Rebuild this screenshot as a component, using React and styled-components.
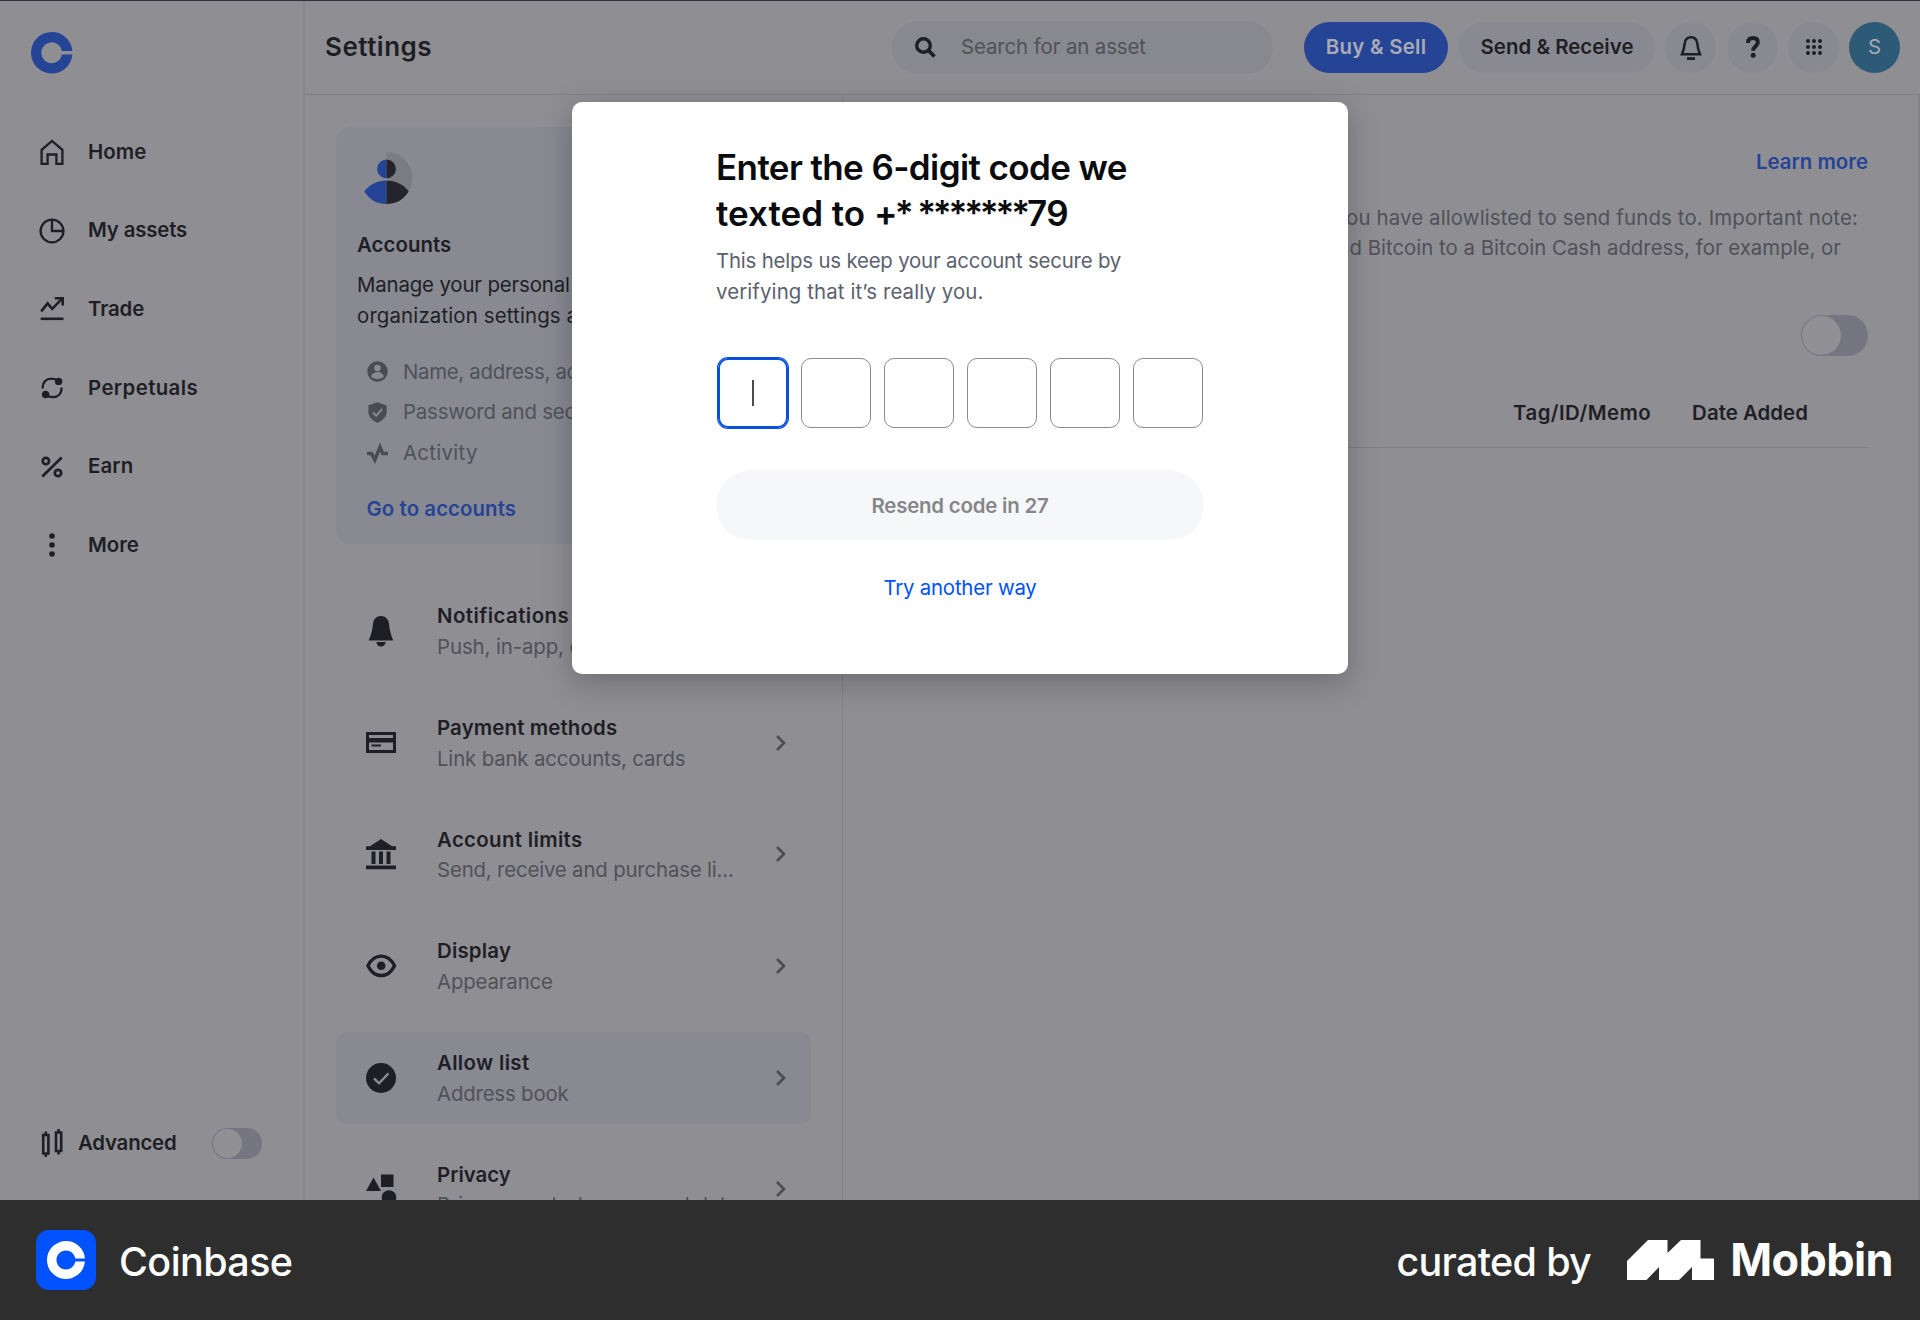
import React from "react";
import styled, { createGlobalStyle, css } from "styled-components";

const c = {
  bg: "#8f8e93",
  panel: "#888991",
  pill: "#88898f",
  line: "#7f8086",
  ink: "#1e1f25",
  muted: "#505159",
  blue: "#254496",
  track: "#757681",
};

const Global = createGlobalStyle`
  * { box-sizing: border-box; }
  body { margin: 0; background: #2e2e2e; font-family: Inter, "Liberation Sans", sans-serif; }
  svg { display: block; flex: none; overflow: visible; }
`;

const Page = styled.div`
  width: 1920px;
  height: 1320px;
  display: flex;
  flex-direction: column;
  overflow: hidden;
`;

const Screen = styled.div`
  position: relative;
  height: 1200px;
  flex: none;
  display: grid;
  grid-template-columns: 305px 1fr;
  overflow: hidden;
  background: ${c.bg};
  border-top: 1px solid #35313c;
  color: ${c.ink};
`;

const Text = styled.span`
  display: block;
  width: max-content;
  white-space: nowrap;
  font-size: ${(p) => p.$size || 20.4}px;
  line-height: ${(p) => p.$lh || 30.6}px;
  font-weight: ${(p) => p.$weight || 400};
  letter-spacing: ${(p) => p.$ls || 0}px;
  color: ${(p) => p.$color || c.ink};
`;

const Track = styled.span`
  letter-spacing: ${(p) => p.$ls}px;
`;

const Sidebar = styled.aside`
  display: flex;
  flex-direction: column;
  border-right: 2px solid #85868c;
  padding: 30.5px 40px 0 31px;
`;

const Nav = styled.nav`
  display: flex;
  flex-direction: column;
  margin-top: 39.5px;
`;

const NavItem = styled.a`
  display: flex;
  align-items: center;
  height: 78.7px;
  gap: 20px;
  padding-left: 5px;
`;

const IconBox = styled.span`
  width: 32px;
  height: 32px;
  display: flex;
  align-items: center;
  justify-content: center;
  flex: none;
`;

const Advanced = styled.div`
  display: flex;
  align-items: center;
  margin-top: 538.5px;
  height: 40px;
  padding-left: 10px;
`;

const AdvancedLabel = styled(Text)`
  margin: 0 36px 0 15px;
`;

const Toggle = styled.span`
  width: ${(p) => p.$w}px;
  height: ${(p) => p.$h}px;
  flex: none;
  border-radius: ${(p) => p.$h / 2}px;
  background: ${c.track};
  padding: 1px;
  display: flex;
  &::before {
    content: "";
    height: 100%;
    aspect-ratio: 1;
    border-radius: 50%;
    background: #919095;
  }
`;

const Main = styled.main`
  display: flex;
  flex-direction: column;
  min-width: 0;
`;

const Header = styled.header`
  height: 94px;
  flex: none;
  border-bottom: 1px solid ${c.line};
  display: flex;
  align-items: center;
  padding: 0 20px 1px 20px;
`;

const PageTitle = styled.h1`
  margin: 0;
  flex: 1;
`;

const Search = styled.div`
  width: 381px;
  height: 53px;
  border-radius: 27px;
  background: ${c.pill};
  display: flex;
  align-items: center;
  gap: 25px;
  padding-left: 23px;
  margin-right: 31px;
`;

const Pill = styled.button`
  border: 0;
  margin: 0 ${(p) => p.$gap}px 0 0;
  padding: 0;
  width: ${(p) => p.$w}px;
  height: 51px;
  border-radius: 26px;
  background: ${(p) => p.$bg || "#898a91"};
  display: flex;
  align-items: center;
  justify-content: center;
  font-family: inherit;
`;

const Columns = styled.div`
  flex: 1;
  display: grid;
  grid-template-columns: 538px 1fr;
  min-height: 0;
`;

const Settings = styled.section`
  border-right: 1px solid ${c.line};
  padding: 32px 31px 0 31px;
  overflow: hidden;
`;

const Card = styled.div`
  height: 417px;
  border-radius: 15px;
  background: ${c.panel};
  padding: 24px 21px 0;
  display: flex;
  flex-direction: column;
  overflow: hidden;
`;

const CardTitle = styled(Text)`
  margin: 24.5px 0 10.2px;
`;

const CardList = styled.div`
  display: flex;
  flex-direction: column;
  margin: 20px 0 20px 10px;
`;

const CardItem = styled.div`
  height: 40.8px;
  display: flex;
  align-items: center;
  gap: 15px;
`;

const CardLink = styled(Text)`
  margin-left: 9.5px;
`;

const Menu = styled.div`
  display: flex;
  flex-direction: column;
  gap: 19.9px;
  margin-top: 41px;
`;

const Row = styled.div`
  height: 91.8px;
  flex: none;
  border-radius: 10px;
  display: grid;
  grid-template-columns: 30px 1fr 14px;
  column-gap: 41px;
  align-items: center;
  padding: 0 21px 0 30px;
  ${(p) => p.$active && css`background: ${c.panel};`}
`;

const RowText = styled.div`
  min-width: 0;
  padding-top: 2px;
`;

const Detail = styled.section`
  border-right: 2px solid #838489;
  padding: 52px 50px 0 50px;
  display: flex;
  flex-direction: column;
  align-items: flex-end;
`;

const Copy = styled.div`
  display: flex;
  flex-direction: column;
  align-items: flex-end;
  margin: 25px 0 51px;
`;

const CopyLine = styled(Text)`
  margin-right: ${(p) => p.$inset}px;
`;

const TableHead = styled.div`
  display: flex;
  justify-content: flex-end;
  gap: 41px;
  align-self: stretch;
  height: 77px;
  margin-top: 15px;
  padding: 27px 60px 0 0;
  border-bottom: 1px solid ${c.line};
`;

const Modal = styled.div`
  position: absolute;
  left: 572px;
  top: 101px;
  width: 776px;
  height: 572px;
  border-radius: 10px;
  background: #fff;
  box-shadow: 0 8px 30px rgba(10, 11, 13, 0.26);
  padding: 43px 144px 0 144px;
  display: flex;
  flex-direction: column;
`;

const Blurb = styled.div`
  margin-top: 9.5px;
`;

const Codes = styled.div`
  display: grid;
  grid-template-columns: repeat(6, 70px);
  column-gap: 13px;
  margin: 50.5px 0 0 1.5px;
`;

const CodeBox = styled.div`
  height: 70px;
  border-radius: 10px;
  border: 1.5px solid #8b8c90;
  display: flex;
  align-items: center;
  justify-content: center;
  ${(p) => p.$focus && css`
    border: 2px solid #0a4fe0;
    box-shadow: 0 0 0 1px #0a4fe0;
    &::before { content: ""; width: 2px; height: 26px; background: #4a4b50; }
  `}
`;

const Resend = styled.button`
  margin: 42px 0 0 0;
  width: 488px;
  height: 70px;
  border: 0;
  border-radius: 35px;
  background: #f6f7f9;
  display: flex;
  align-items: center;
  justify-content: center;
  padding: 2px 0 0;
  font-family: inherit;
`;

const TryOther = styled.a`
  align-self: center;
  margin-top: 32.5px;
`;

const Footer = styled.footer`
  height: 120px;
  background: #2e2e2e;
  display: flex;
  align-items: center;
  padding: 0 27px 0 36px;
`;

const FooterText = styled(Text)`
  padding-top: ${(p) => p.$drop || 0}px;
`;

const AppIcon = styled.span`
  width: 60px;
  height: 60px;
  border-radius: 13px;
  background: #0052ff;
  display: flex;
  align-items: center;
  justify-content: center;
  margin-right: 23px;
`;

const Curated = styled.div`
  margin-left: auto;
  display: flex;
  align-items: center;
`;

const MobbinMark = styled.span`
  margin: 0 16px 0 36px;
`;

const Svg = ({ w = 26, h = w, children, vb }) => (
  <svg width={w} height={h} viewBox={vb || `0 0 ${w} ${h}`} fill="none">{children}</svg>
);

const CoinMark = ({ size, color }) => (
  <Svg w={size} vb="0 0 40 40">
    <path fill={color} fillRule="evenodd" d="M20 0a20 20 0 1 0 19.9 21.7H29.8a10 10 0 1 1 0-3.4h10.1A20 20 0 0 0 20 0z" />
  </Svg>
);

const S = { stroke: c.ink, strokeWidth: 2.3 };
const icons = {
  home: <Svg><path {...S} d="M2.6 24.8V10.9L13 2l10.4 8.900V24.800H17.400V15.500H8.600V24.800z" /></Svg>,
  assets: <Svg><circle {...S} cx="13" cy="13" r="11.400" /><path {...S} d="M13 1.600V13H24.400" /></Svg>,
  trade: <Svg><path {...S} strokeWidth="2.600" d="M2.200 15.400 8.600 7.400l4.600 5.400L22.600 3.200" /><path {...S} strokeWidth="2.600" d="M15.800 2.300h7.900v7.200" /><path stroke={c.ink} strokeWidth="2.600" d="M1.700 22.800h22.800" /></Svg>,
  perp: <Svg><path {...S} strokeWidth="2.300" d="M3.700 13.400C3.700 7 7.400 3.700 12.500 3.700c2.600 0 4.600.700 6.500 2.300M22.600 12.400c0 6.400-3.700 9.700-8.800 9.700-2.600 0-4.600-.700-6.500-2.300" /><circle cx="19.600" cy="6.400" r="3.700" fill={c.ink} /><circle cx="6.600" cy="19.500" r="3.700" fill={c.ink} /></Svg>,
  earn: <Svg><circle {...S} cx="6.900" cy="7" r="3.200" strokeWidth="2.700" /><circle {...S} cx="19" cy="19" r="3.200" strokeWidth="2.700" /><path {...S} strokeWidth="2.700" d="M3.300 22.500 22.700 3.500" /></Svg>,
  more: <Svg><circle cx="13" cy="4" r="2.800" fill={c.ink} /><circle cx="13" cy="13" r="2.800" fill={c.ink} /><circle cx="13" cy="22" r="2.800" fill={c.ink} /></Svg>,
  candles: <Svg w={22} h={28}><path {...S} strokeWidth="2.600" d="M2.200 6h5.200v18.500H2.200zM4.800 2.500v3M4.800 24.500v3.500M15 3.500h5.200V22H15zM17.600 0v3.500M17.600 22v3.500" /></Svg>,
  search: <Svg w={21}><circle cx="8.500" cy="8.500" r="6.800" stroke={c.ink} strokeWidth="3.400" /><path d="m13.500 13.500 6 6" stroke={c.ink} strokeWidth="3.800" /></Svg>,
  bellLine: <Svg w={24}><path stroke={c.ink} strokeWidth="2.600" d="M3 19.300h18c-1.500-3.500-2.300-6.700-2.600-10.300C18 4.500 15.700 2.300 12 2.300S6 4.500 5.600 9C5.300 12.600 4.500 15.800 3 19.300z" /><path stroke={c.ink} strokeWidth="2.800" d="M8 23.600h8" /></Svg>,
  help: <Svg w={14} h={22}><path stroke={c.ink} strokeWidth="4" d="M2 7C2 3.500 4 2 6.900 2c3 0 4.900 1.500 4.900 4.200 0 4.300-4.600 3.800-4.600 8.500" /><circle cx="7.200" cy="19.300" r="2.500" fill={c.ink} /></Svg>,
  grid: <Svg w={16}>{[2, 8, 14].map((y) => [2, 8, 14].map((x) => <circle key={`${x}${y}`} cx={x} cy={y} r="2" fill={c.ink} />))}</Svg>,
  user: <Svg w={21}><circle cx="10.500" cy="10.500" r="10.200" fill="#4a4b54" /><circle cx="10.500" cy="7" r="3.300" fill={c.panel} /><path fill={c.panel} d="M4 15.500c1.200-3 3.500-4.500 6.500-4.500s5.300 1.500 6.500 4.500c-1.400 1.600-3.600 2.500-6.500 2.500S5.400 17.100 4 15.500z" /></Svg>,
  shield: <Svg w={21}><path fill="#4a4b54" d="M10.500.300 19.600 3.500V10c0 5.200-4.300 8.700-9.100 10.800C5.700 18.700 1.400 15.200 1.400 10V3.500z" /><path stroke={c.panel} strokeWidth="2" d="m6 10.500 3.200 3.200 6-6.800" /></Svg>,
  pulse: <Svg w={21}><path stroke="#4a4b54" strokeWidth="3.400" d="M0 10.500h4.500l3.300 6.500L13 4l2.700 6.500H21" /></Svg>,
  bell: <Svg w={30} h={32}><path fill={c.ink} d="M2.700 25.500C5.500 19 6.500 14 6.900 9.500 7.300 4 10.500 1 15 1s7.700 3 8.100 8.500c.4 4.500 1.400 9.500 4.200 16zM10.300 27h9.400c-.300 2.700-2.100 4.500-4.700 4.500s-4.400-1.800-4.700-4.500z" /></Svg>,
  card: <Svg w={30} h={21}><path stroke={c.ink} strokeWidth="3" d="M1.500 1.500h27v18h-27z" /><path fill={c.ink} d="M1 6h28v4.500H1zM5.500 12.500h9.500v2H5.500z" /></Svg>,
  bank: <Svg w={30} h={30}><path fill={c.ink} d="M15 0 26 7.300h4V11H0V7.300h4zM5.500 12.500h4V25h-4zM13 12.500h4V25h-4zM20.500 12.500h4V25h-4zM0 26.500h30V30.300H0z" /></Svg>,
  eye: <Svg w={30} h={23}><path stroke={c.ink} strokeWidth="3.400" d="M2 11.800C5 5.300 9.500 2.100 15.200 2.100S25.400 5.300 28.500 11.800C25.400 18.300 20.900 21.500 15.200 21.500S5 18.300 2 11.800z" /><circle cx="15.200" cy="11.800" r="4.300" fill={c.ink} /></Svg>,
  check: <Svg w={30}><circle cx="15" cy="15" r="15" fill={c.ink} /><path stroke={c.panel} strokeWidth="2.400" d="m8 15.300 5 5 9.500-10" /></Svg>,
  shapes: <Svg w={30} h={32}><path fill={c.ink} d="M7.500 4.500 15 18H0zM15 1.500h12.500V14H15z" /><circle cx="23" cy="24.500" r="7.300" fill={c.ink} /></Svg>,
};

const Chevron = () => (
  <Svg w={10} h={16}><path d="m1 1 7 7-7 7" stroke="#4b4c54" strokeWidth="2.600" /></Svg>
);

const AccountArt = () => (
  <Svg w={54} h={54}>
    <path fill="#7b7b83" d="M29.500 1a26 26 0 0 1 22.300 39L29.500 27z" />
    <path fill={c.blue} d="M29.500 8.500a9.400 9.400 0 0 0 0 18.800zM29.500 29.500C19 29.500 11 35 7.300 40.500 13 49.500 21 53 29.500 53z" />
    <path fill="#23242c" d="M29.500 8.500a9.400 9.400 0 0 1 0 18.800zM29.500 29.500C40 29.500 48 35 51.700 40.500 46 49.500 38 53 29.500 53z" />
  </Svg>
);

const nav = [
  ["home", "Home", 0.1],
  ["assets", "My assets", -0.15],
  ["trade", "Trade", -0.1],
  ["perp", "Perpetuals", 0.4],
  ["earn", "Earn", 0.1],
  ["more", "More", 0],
];

const rows = [
  ["bell", "Notifications", 0.45, "Push, in-app, email", -0.1],
  ["card", "Payment methods", 0.15, "Link bank accounts, cards", -0.16],
  ["bank", "Account limits", 0.35, "Send, receive and purchase li...", -0.17],
  ["eye", "Display", 0.2, "Appearance", -0.15],
  ["check", "Allow list", 0.35, "Address book", -0.18],
  ["shapes", "Privacy", 0, "Privacy controls, personal data", 0.1],
];

export default function App() {
  return (
    <Page>
      <Global />
      <Screen>
        <Sidebar>
          <CoinMark size={41.5} color={c.blue} />
          <Nav>
            {nav.map(([icon, label, ls]) => (
              <NavItem key={label}>
                <IconBox>{icons[icon]}</IconBox>
                <Text $weight={600} $ls={ls}>{label}</Text>
              </NavItem>
            ))}
          </Nav>
          <Advanced>
            {icons.candles}
            <AdvancedLabel $weight={600} $ls={-0.2}>Advanced</AdvancedLabel>
            <Toggle $w={50} $h={31} />
          </Advanced>
        </Sidebar>
        <Main>
          <Header>
            <PageTitle><Text $weight={600} $size={26} $lh={32} $ls={0.5}>Settings</Text></PageTitle>
            <Search>{icons.search}<Text $color={c.muted} $ls={-0.1}>Search for an asset</Text></Search>
            <Pill $w={144} $gap={11} $bg={c.blue}><Text $weight={600} $ls={0.3} $color="#a9abb5">Buy &amp; Sell</Text></Pill>
            <Pill $w={196} $gap={10}><Text $weight={600} $ls={0.05}>Send &amp; Receive</Text></Pill>
            <Pill $w={51} $gap={11}>{icons.bellLine}</Pill>
            <Pill $w={51} $gap={10}>{icons.help}</Pill>
            <Pill $w={51} $gap={10}>{icons.grid}</Pill>
            <Pill $w={51} $gap={0} $bg="#2c5a77"><Text $color="#a2a9b2">S</Text></Pill>
          </Header>
          <Columns>
            <Settings>
              <Card>
                <AccountArt />
                <CardTitle $weight={600} $ls={0.05}>Accounts</CardTitle>
                <Text $ls={-0.15}>Manage your personal and</Text>
                <Text $ls={0.15}>organization settings and</Text>
                <CardList>
                  <CardItem>{icons.user}<Text $color={c.muted} $ls={-0.3}>Name, address, account</Text></CardItem>
                  <CardItem>{icons.shield}<Text $color={c.muted} $ls={-0.2}>Password and security</Text></CardItem>
                  <CardItem>{icons.pulse}<Text $color={c.muted} $ls={0.3}>Activity</Text></CardItem>
                </CardList>
                <CardLink $weight={600} $ls={0.08} $color={c.blue}>Go to accounts</CardLink>
              </Card>
              <Menu>
                {rows.map(([icon, title, ls, sub, ls2]) => (
                  <Row key={title} $active={title === "Allow list"}>
                    {icons[icon]}
                    <RowText>
                      <Text $weight={600} $ls={ls}>{title}</Text>
                      <Text $color={c.muted} $ls={ls2}>{sub}</Text>
                    </RowText>
                    <Chevron />
                  </Row>
                ))}
              </Menu>
            </Settings>
            <Detail>
              <Text $weight={600} $ls={0.02} $color={c.blue}>Learn more</Text>
              <Copy>
                <CopyLine $inset={10} $ls={0.14} $color={c.muted}>you have allowlisted to send funds to. Important note:</CopyLine>
                <CopyLine $inset={27} $ls={0} $color={c.muted}>send Bitcoin to a Bitcoin Cash address, for example, or</CopyLine>
              </Copy>
              <Toggle $w={67} $h={41} />
              <TableHead>
                <Text $weight={600} $ls={0.45}>Tag/ID/Memo</Text>
                <Text $weight={600} $ls={0.05}>Date Added</Text>
              </TableHead>
            </Detail>
          </Columns>
        </Main>
        <Modal>
          <Text $weight={600} $size={35} $lh={45.9} $ls={-0.6} $color="#0a0b0d">Enter the 6-digit code we</Text>
          <Text $weight={600} $size={35} $lh={45.9} $color="#0a0b0d">
            <Track $ls={0}>texted to </Track>
            <Track $ls={-2.7}>+* </Track>
            <Track $ls={-3.2}>*******</Track>
            <Track $ls={-0.6}>79</Track>
          </Text>
          <Blurb>
            <Text $ls={-0.19} $color="#5b616e">This helps us keep your account secure by</Text>
            <Text $ls={0.12} $color="#5b616e">verifying that it’s really you.</Text>
          </Blurb>
          <Codes>{[0, 1, 2, 3, 4, 5].map((i) => <CodeBox key={i} $focus={i === 0} />)}</Codes>
          <Resend><Text $weight={600} $ls={-0.2} $color="#858689">Resend code in 27</Text></Resend>
          <TryOther><Text $ls={-0.2} $color="#0052ff">Try another way</Text></TryOther>
        </Modal>
      </Screen>
      <Footer>
        <AppIcon><CoinMark size={38} color="#fff" /></AppIcon>
        <FooterText $drop={3} $weight={500} $size={39.5} $lh={60} $ls={-0.6} $color="#fff">Coinbase</FooterText>
        <Curated>
          <FooterText $drop={3} $weight={500} $size={39.5} $lh={60} $ls={-0.7} $color="#fff">curated by</FooterText>
          <MobbinMark>
            <Svg w={87} h={40}><path fill="#fff" d="M0 21 21 0h19.500v13L54 0h19.500v18.500H87V40H65V27L52 40H32V27L19.500 40H0z" /></Svg>
          </MobbinMark>
          <FooterText $weight={700} $size={45} $lh={60} $ls={-0.6} $color="#fff">Mobbin</FooterText>
        </Curated>
      </Footer>
    </Page>
  );
}
